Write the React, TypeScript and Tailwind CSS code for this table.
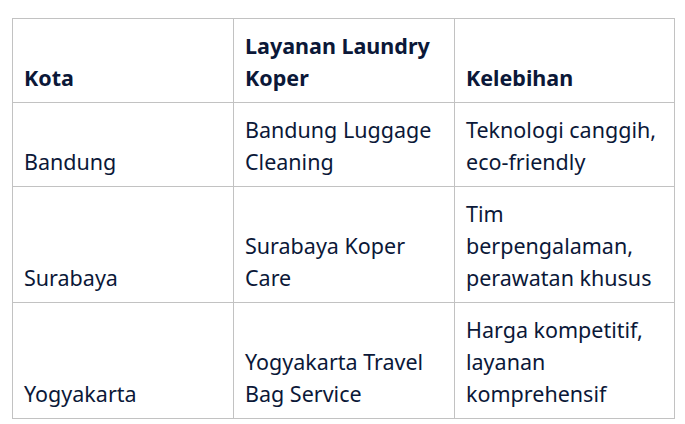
const ROWS: { kota: string; layanan: string[]; kelebihan: string[] }[] = [
  {
    kota: "Bandung",
    layanan: ["Bandung Luggage", "Cleaning"],
    kelebihan: ["Teknologi canggih,", "eco-friendly"],
  },
  {
    kota: "Surabaya",
    layanan: ["Surabaya Koper", "Care"],
    kelebihan: ["Tim", "berpengalaman,", "perawatan khusus"],
  },
  {
    kota: "Yogyakarta",
    layanan: ["Yogyakarta Travel", "Bag Service"],
    kelebihan: ["Harga kompetitif,", "layanan", "komprehensif"],
  },
];

const CELL =
  "border border-[#c2c2c2] px-[11px] py-0 align-bottom text-left whitespace-nowrap";

function Lines({ lines }: { lines: string[] }) {
  return (
    <div className="pb-[8px]">
      {lines.map((l, i) => (
        <div key={i} className="h-[32px] leading-[32px]">
          {l}
        </div>
      ))}
    </div>
  );
}

export default function App() {
  return (
    <div
      className="min-h-screen bg-white pl-[12px] pt-[18px] text-[21.5px] leading-[32px] text-[#0b1838]"
      style={{ fontFamily: '"Noto Sans", "Open Sans", sans-serif' }}
    >
      <table className="w-[662px] table-fixed border-collapse">
        <colgroup>
          <col className="w-[221px]" />
          <col className="w-[221px]" />
          <col className="w-[220px]" />
        </colgroup>
        <thead>
          <tr className="h-[84px]">
            <th className={`${CELL} font-bold`}>
              <Lines lines={["Kota"]} />
            </th>
            <th className={`${CELL} font-bold`}>
              <Lines lines={["Layanan Laundry", "Koper"]} />
            </th>
            <th className={`${CELL} font-bold`}>
              <Lines lines={["Kelebihan"]} />
            </th>
          </tr>
        </thead>
        <tbody>
          {ROWS.map((r) => (
            <tr key={r.kota} className={r.kelebihan.length > 2 ? "h-[116px]" : "h-[84px]"}>
              <td className={CELL}>
                <Lines lines={[r.kota]} />
              </td>
              <td className={CELL}>
                <Lines lines={r.layanan} />
              </td>
              <td className={CELL}>
                <Lines lines={r.kelebihan} />
              </td>
            </tr>
          ))}
        </tbody>
      </table>
    </div>
  );
}
